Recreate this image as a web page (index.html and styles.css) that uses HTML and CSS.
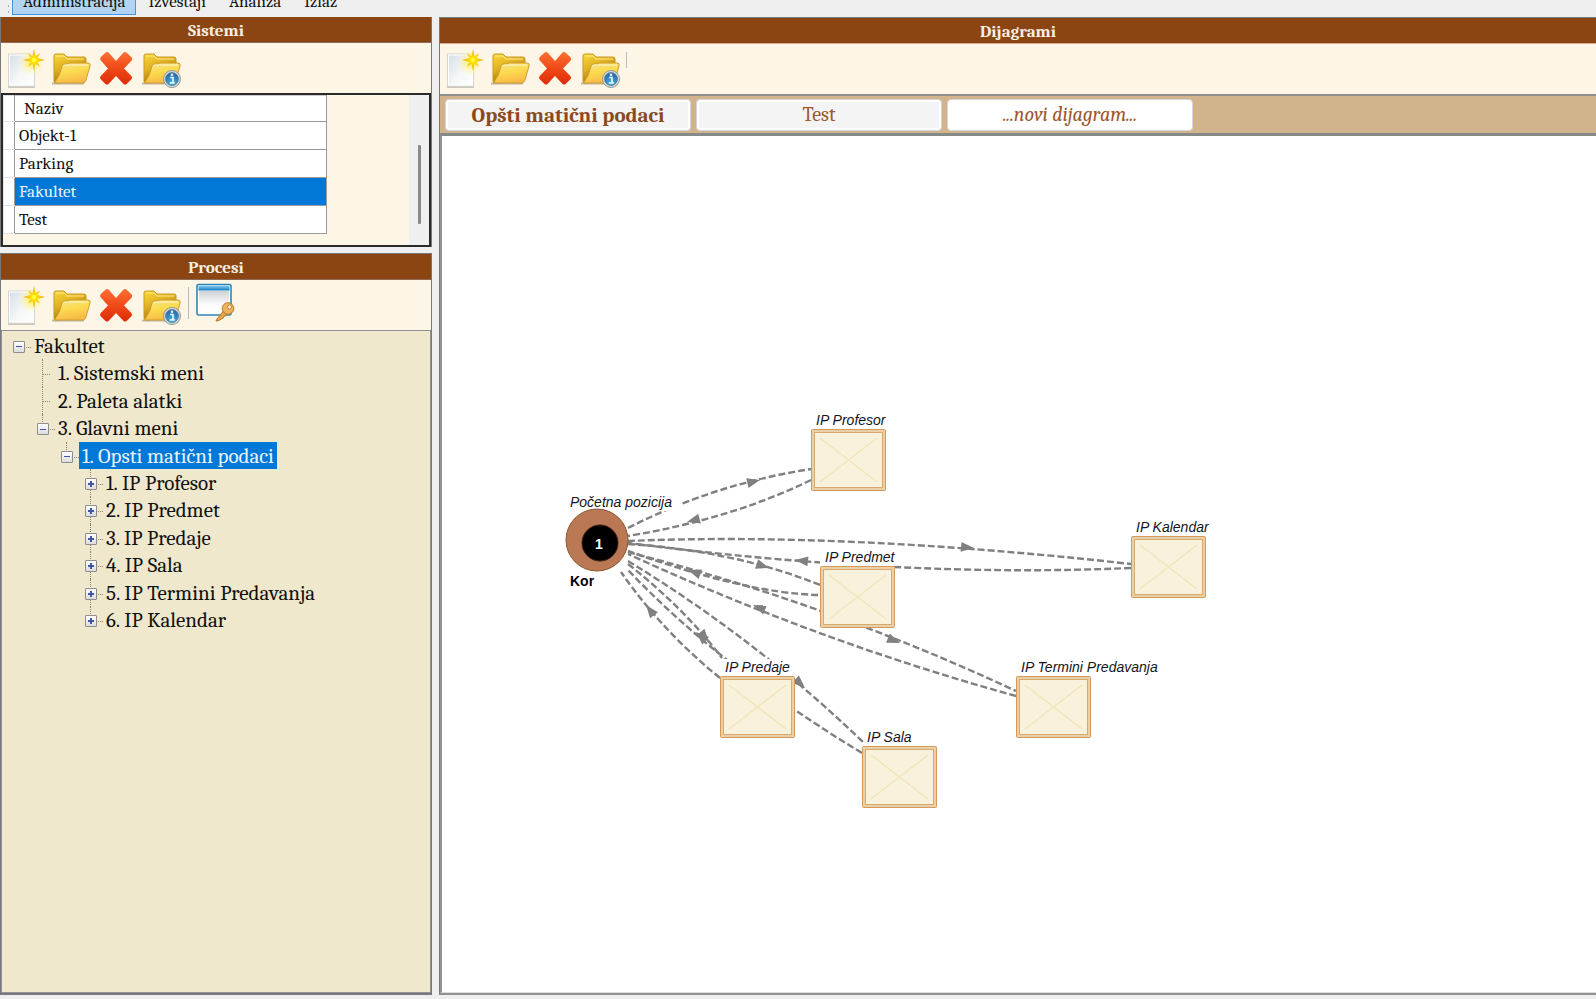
FILE: index.html
```
<!DOCTYPE html>
<html lang="sr-Latn">
<head>
<meta charset="utf-8">
<title>Sistemi i dijagrami</title>
<link rel="stylesheet" href="styles.css">
</head>
<body>
<svg class="defs" aria-hidden="true">
  <defs>
    <linearGradient id="paper" x1="0" y1="0" x2="1" y2="1"><stop offset="0" stop-color="#d3dde6"/><stop offset=".55" stop-color="#f5f7f8"/><stop offset="1" stop-color="#fff"/></linearGradient>
    <radialGradient id="glow"><stop offset="0" stop-color="#fff04a" stop-opacity=".9"/><stop offset="1" stop-color="#fff9a0" stop-opacity="0"/></radialGradient>
    <radialGradient id="spark"><stop offset="0" stop-color="#fff600"/><stop offset="1" stop-color="#f7a116"/></radialGradient>
    <linearGradient id="fback" x1="0" y1="0" x2=".5" y2="1"><stop offset="0" stop-color="#fbd93a"/><stop offset=".5" stop-color="#dfae22"/><stop offset="1" stop-color="#8e640c"/></linearGradient>
    <linearGradient id="ffront" x1="0" y1="0" x2=".3" y2="1"><stop offset="0" stop-color="#f3e29a"/><stop offset=".5" stop-color="#fbdc4e"/><stop offset="1" stop-color="#f9bb48"/></linearGradient>
    <linearGradient id="red" x1="0" y1="0" x2="0" y2="1"><stop offset="0" stop-color="#ff7034"/><stop offset=".5" stop-color="#ef4a18"/><stop offset="1" stop-color="#de2c08"/></linearGradient>
    <radialGradient id="info" cx=".5" cy=".8" r=".7"><stop offset="0" stop-color="#3db6e4"/><stop offset="1" stop-color="#2a68ac"/></radialGradient>
    <linearGradient id="win" x1="0" y1="0" x2="0" y2="1"><stop offset="0" stop-color="#cfd3d6"/><stop offset=".6" stop-color="#fafafa"/><stop offset="1" stop-color="#fff"/></linearGradient>
    <linearGradient id="bar" x1="0" y1="0" x2="0" y2="1"><stop offset="0" stop-color="#8ccdf0"/><stop offset="1" stop-color="#0d7cc4"/></linearGradient>
  </defs>
  <symbol id="i-new" viewBox="0 0 40 40">
    <path d="M2 39h27" stroke="#b9b5aa" stroke-width="1.4"/>
    <rect x="2.500" y="6" width="26" height="32" fill="url(#paper)" stroke="#d5d5d0"/>
    <rect x="3.500" y="7" width="24" height="30" fill="none" stroke="#fff"/>
    <circle cx="25" cy="15" r="13" fill="url(#glow)"/>
    <path d="M28 1l1.500 7 4.500-2.500-2.500 4.500 7.500 2-7.500 2 2.500 4.500-4.500-2.500-1.500 7-1.500-7-4.500 2.500 2.500-4.500-7.500-2 7.500-2-2.500-4.500 4.500 2.500z" fill="url(#spark)"/>
    <circle cx="28" cy="12" r="2" fill="#ffff40"/>
  </symbol>
  <symbol id="i-folder" viewBox="0 0 40 40">
    <path d="M1 35.500h32" stroke="#a39d8a" stroke-width="2" opacity=".7"/>
    <path d="M3 8q0-2 2-2h8l3 3h17q2 0 2 2v6L30 33 5 35q-2 0-2-2z" fill="url(#fback)" stroke="#c79a1e"/>
    <path d="M5 8h8l3 3h17" fill="none" stroke="#ffe98a"/>
    <path d="M4 34Q9 28 11 18q1-2 3-2h3l2-1h18q3 0 2 3l-4 14q-1 3-3 3H5q-1 0-1-1z" fill="url(#ffront)" stroke="#cf9f2d"/>
    <path d="M12 18q1-1 3-1h22" fill="none" stroke="#fff6c6"/>
  </symbol>
  <symbol id="i-delete" viewBox="0 0 40 40">
    <path d="M4.600 9.200l5-4.600q1.500-1 3 0L20 13l7.500-8.400q1.500-1 3 0l5.200 5q1 1.400 0 2.800L28 20.500l7.600 7.800q1 1.400 0 2.800l-5 5q-1.500 1-3 0L20 28l-7.500 8.100q-1.500 1-3 0l-5-5q-1-1.400 0-2.800L12 20.500 4.600 12.200q-1-1.500 0-3z" fill="url(#red)"/>
  </symbol>
  <symbol id="i-folder-info" viewBox="0 0 40 40">
    <use href="#i-folder"/>
    <circle cx="31" cy="31" r="8.500" fill="#d9dcd8" stroke="#8f9a9a"/>
    <circle cx="31" cy="31" r="6.500" fill="url(#info)" stroke="#5b7f94" stroke-width=".8"/>
    <path d="M29 29.500h3v5h1.500M28.800 34.800h5" fill="none" stroke="#e6f4fa" stroke-width="1.700"/>
    <circle cx="31" cy="26.800" r="1.300" fill="#e6f4fa"/>
  </symbol>
  <symbol id="i-window-key" viewBox="0 0 40 40">
    <rect x="1" y="1.500" width="34" height="30.500" rx="1.500" fill="#fff" stroke="#2e87b8" stroke-width="1.600"/>
    <rect x="2.500" y="2.500" width="31" height="5" fill="url(#bar)"/>
    <rect x="3" y="8" width="30" height="22" fill="url(#win)"/>
    <path d="M29 26L21 36l-1 2 3-.5 2-1.500 2-.5.500-2 2-.5 3-4" fill="#e8a548" stroke="#b4772a"/>
    <circle cx="32" cy="25.500" r="5.800" fill="#efb25a" stroke="#b4772a"/>
    <circle cx="33.500" cy="24" r="2" fill="#fff4dc" stroke="#b4772a" stroke-width=".8"/>
  </symbol>
</svg>

<div class="app">
  <nav class="menubar" aria-label="Glavni meni">
    <span class="grip"></span>
    <button class="menu menu-active" type="button">Administracija</button>
    <button class="menu" type="button">Izveštaji</button>
    <button class="menu" type="button">Analiza</button>
    <button class="menu" type="button">Izlaz</button>
  </nav>
  <main class="workspace">
    <div class="sidebar">
      <section class="panel systems">
        <h2 class="title">Sistemi</h2>
        <div class="toolbar">
          <button class="tool" type="button" aria-label="Novi sistem"><svg><use href="#i-new"/></svg></button>
          <button class="tool" type="button" aria-label="Otvori sistem"><svg><use href="#i-folder"/></svg></button>
          <button class="tool" type="button" aria-label="Obriši sistem"><svg><use href="#i-delete"/></svg></button>
          <button class="tool" type="button" aria-label="Podaci o sistemu"><svg><use href="#i-folder-info"/></svg></button>
        </div>
        <div class="gridbox">
          <table class="grid">
            <thead><tr><th class="mark"></th><th>Naziv</th></tr></thead>
            <tbody>
              <tr><td class="mark"></td><td>Objekt-1</td></tr>
              <tr><td class="mark"></td><td>Parking</td></tr>
              <tr class="selected"><td class="mark"></td><td>Fakultet</td></tr>
              <tr><td class="mark"></td><td>Test</td></tr>
            </tbody>
          </table>
          <div class="track"><div class="thumb"></div></div>
        </div>
      </section>
      <section class="panel processes">
        <h2 class="title">Procesi</h2>
        <div class="toolbar">
          <button class="tool" type="button" aria-label="Novi proces"><svg><use href="#i-new"/></svg></button>
          <button class="tool" type="button" aria-label="Otvori proces"><svg><use href="#i-folder"/></svg></button>
          <button class="tool" type="button" aria-label="Obriši proces"><svg><use href="#i-delete"/></svg></button>
          <button class="tool" type="button" aria-label="Podaci o procesu"><svg><use href="#i-folder-info"/></svg></button>
          <span class="sep"></span>
          <button class="tool tool-key" type="button" aria-label="Prava pristupa"><svg><use href="#i-window-key"/></svg></button>
        </div>
        <div class="treebox">
          <ul class="tree">
            <li class="l0"><button class="toggle" type="button" aria-label="Skupi"></button><span class="node">Fakultet</span></li>
            <li class="l1 line"><span class="stub"></span><span class="node">1. Sistemski meni</span></li>
            <li class="l1 line"><span class="stub"></span><span class="node">2. Paleta alatki</span></li>
            <li class="l1 line last"><button class="toggle" type="button" aria-label="Skupi"></button><span class="node">3. Glavni meni</span></li>
            <li class="l2 line last"><button class="toggle" type="button" aria-label="Skupi"></button><span class="node chosen">1. Opsti matični podaci</span></li>
            <li class="l3 line"><button class="toggle plus" type="button" aria-label="Proširi"></button><span class="node">1. IP Profesor</span></li>
            <li class="l3 line"><button class="toggle plus" type="button" aria-label="Proširi"></button><span class="node">2. IP Predmet</span></li>
            <li class="l3 line"><button class="toggle plus" type="button" aria-label="Proširi"></button><span class="node">3. IP Predaje</span></li>
            <li class="l3 line"><button class="toggle plus" type="button" aria-label="Proširi"></button><span class="node">4. IP Sala</span></li>
            <li class="l3 line"><button class="toggle plus" type="button" aria-label="Proširi"></button><span class="node">5. IP Termini Predavanja</span></li>
            <li class="l3 line last"><button class="toggle plus" type="button" aria-label="Proširi"></button><span class="node">6. IP Kalendar</span></li>
          </ul>
        </div>
      </section>
    </div>
    <section class="diagrams">
      <h2 class="title">Dijagrami</h2>
      <div class="toolbar">
        <button class="tool" type="button" aria-label="Novi dijagram"><svg><use href="#i-new"/></svg></button>
        <button class="tool" type="button" aria-label="Otvori dijagram"><svg><use href="#i-folder"/></svg></button>
        <button class="tool" type="button" aria-label="Obriši dijagram"><svg><use href="#i-delete"/></svg></button>
        <button class="tool" type="button" aria-label="Podaci o dijagramu"><svg><use href="#i-folder-info"/></svg></button>
        <span class="sep sep-short"></span>
      </div>
      <div class="tabs">
        <button class="tab tab-active" type="button">Opšti matični podaci</button>
        <button class="tab" type="button">Test</button>
        <button class="tab tab-new" type="button">...novi dijagram...</button>
      </div>
      <div class="canvas">
        <svg class="drawing" role="img" aria-label="Opšti matični podaci">
          <defs>
            <path id="head" d="M0 0L-13-5V5z"/>
            <g id="ip">
              <rect x=".5" y=".5" width="74" height="61" rx="1" fill="#e9d0a6" stroke="#d39a5c"/>
              <rect x="3.500" y="3.500" width="68" height="55" fill="#f8f1dc" stroke="#d9aa70"/>
              <path d="M9 9l57 44M66 9L9 53" stroke="#f1e6ba" stroke-width="1.500"/>
            </g>
          </defs>
          <g transform="translate(-442 -136)">
            <g class="links">
              <path d="M628 528Q714 484 811 469"/>
              <path d="M811 480Q731 519 628 536"/>
              <path d="M628 541Q844 532 1131 564"/>
              <path d="M1131 568Q900 578 628 543"/>
              <path d="M628 544Q736 551 820 585"/>
              <path d="M818 595Q745 593 628 551"/>
              <path d="M628 552Q830 604 1016 691"/>
              <path d="M1016 696Q820 642 628 554"/>
              <path d="M628 561Q756 639 863 742"/>
              <path d="M862 753Q720 667 628 570"/>
              <path d="M628 564Q684 608 722 658"/>
              <path d="M720 678Q662 631 621 572"/>
            </g>
            <g class="heads">
              <use href="#head" transform="translate(760 480) rotate(-14)"/>
              <use href="#head" transform="translate(687 522) rotate(165)"/>
              <use href="#head" transform="translate(974 548) rotate(5)"/>
              <use href="#head" transform="translate(795 560) rotate(186)"/>
              <use href="#head" transform="translate(769 568) rotate(18)"/>
              <use href="#head" transform="translate(688 570) rotate(199)"/>
              <use href="#head" transform="translate(900 643) rotate(22)"/>
              <use href="#head" transform="translate(753 605) rotate(202)"/>
              <use href="#head" transform="translate(805 688) rotate(43)"/>
              <use href="#head" transform="translate(696 632) rotate(222)"/>
              <use href="#head" transform="translate(709 642) rotate(50)"/>
              <use href="#head" transform="translate(646 605) rotate(232)"/>
            </g>
            <g fill="#fff">
              <rect x="568" y="494" width="113" height="17"/>
              <rect x="820" y="549" width="76" height="17"/>
              <rect x="722" y="659" width="73" height="17"/>
              <rect x="864" y="729" width="50" height="17"/>
            </g>
            <use href="#ip" x="811" y="429"/>
            <use href="#ip" x="820" y="566"/>
            <use href="#ip" x="720" y="676"/>
            <use href="#ip" x="862" y="746"/>
            <use href="#ip" x="1131" y="536"/>
            <use href="#ip" x="1016" y="676"/>
            <g class="labels">
              <text x="816" y="425">IP Profesor</text>
              <text x="825" y="562">IP Predmet</text>
              <text x="725" y="672">IP Predaje</text>
              <text x="867" y="742">IP Sala</text>
              <text x="1136" y="532">IP Kalendar</text>
              <text x="1021" y="672">IP Termini Predavanja</text>
              <text x="570" y="507">Početna pozicija</text>
            </g>
            <circle cx="597" cy="540" r="31" fill="#ba7855" stroke="#8a5a28"/>
            <circle cx="600" cy="543" r="18" fill="#000" stroke="#3a2418"/>
            <text class="start" x="599" y="549">1</text>
            <text class="owner" x="570" y="586">Kor</text>
          </g>
        </svg>
      </div>
    </section>
  </main>
</div>
</body>
</html>
```

FILE: styles.css
```
* { box-sizing: border-box; }
html, body { height: 100%; margin: 0; }
body {
  background: #efefef;
  color: #111;
  font-family: Cambria, Caladea, "Liberation Serif", serif;
  overflow: hidden;
}
button { font: inherit; color: inherit; margin: 0; padding: 0; }
.defs { position: absolute; width: 0; height: 0; }

.app { display: flex; flex-direction: column; height: 100vh; padding-bottom: 4px; }

.menubar { display: flex; align-items: flex-end; height: 17px; padding: 0 0 2px 7px; overflow: hidden; flex: none; }
.grip { width: 3px; height: 12px; margin-right: 2px; background: radial-gradient(circle, #aaa 1px, transparent 1px) 0 0 / 3px 6px; }
.menu { height: 26px; padding: 0 10px; border: 1px solid transparent; background: none; font-size: 17px; line-height: 24px; white-space: nowrap; flex: none; }
.menu + .menu { margin-left: 1px; }
.menu-active { background: #b0d4f1; border-color: #3f96df; }

.workspace { display: flex; flex: 1; min-height: 0; gap: 7px; }
.sidebar { display: flex; flex-direction: column; width: 432px; gap: 6px; flex: none; }
.panel { display: flex; flex-direction: column; border: 1px solid #77797b; }
.systems { border-top: 0; border-bottom: 0; }
.processes { flex: 1; min-height: 0; border-bottom-width: 2px; }

.title { margin: 0; height: 26px; flex: none; background: #8b4513; color: #f8eee2; font-size: 17px; font-weight: bold; line-height: 27px; text-align: center; border-bottom: 1px solid #8c6a55; }
.toolbar { display: flex; gap: 5px; height: 50px; padding: 5px 0 0 5px; background: #fdf5e6; flex: none; }
.tool { width: 40px; height: 40px; border: 0; background: none; flex: none; }
.tool svg { display: block; width: 40px; height: 40px; }
.sep { width: 1px; height: 32px; margin: 2px 0 0 2px; background: #b9bbc0; }
.tool-key { margin: -2px 0 0 2px; }

.gridbox { display: flex; justify-content: space-between; height: 154px; border: 2px solid #2a2a2a; background: #fdf5e6; }
.grid { width: 324px; height: 139px; border-collapse: collapse; table-layout: fixed; font-size: 17px; }
.grid th, .grid td { border: 1px solid #999; background: #fff; padding: 1px 4px 0; text-align: left; font-weight: normal; line-height: 24px; }
.grid thead th { padding-left: 9px; border-top-color: #ccc; }
.grid .mark { width: 11px; padding: 0; border-color: #e3e3e3; border-right-color: #999; }
.grid .selected td:last-child { background: #0078d7; color: #e8f2fb; }
.track { width: 20px; height: 100%; padding: 50px 8px 0 9px; background: #efefef; }
.thumb { height: 79px; background: #8a8a8a; border-radius: 1px; }

.treebox { flex: 1; min-height: 0; padding: 1px 0 0 9px; border: 1px solid #8f9196; background: #efe8cc; }
.tree { display: grid; grid-auto-rows: 1fr; height: 302px; margin: 0; padding: 0; list-style: none; font-size: 21px; }
.tree li { position: relative; display: flex; align-items: center; white-space: nowrap; }
.l1 { margin-left: 24px; }
.l2 { margin-left: 48px; }
.l3 { margin-left: 72px; }
.line::before { content: ""; position: absolute; left: 7px; top: 0; bottom: 0; border-left: 1px dotted #8a8674; }
.last::before { bottom: 50%; }
.toggle { position: relative; width: 12px; height: 12px; margin: 2px 0 0 2px; border: 1px solid #8d8d8d; border-radius: 1px; background: linear-gradient(90deg, #3f57a5, #3f57a5) center / 6px 1px no-repeat, linear-gradient(#fff, #dcdcdc); flex: none; }
.plus { background: linear-gradient(#3f57a5, #3f57a5) center / 6px 2px no-repeat, linear-gradient(#3f57a5, #3f57a5) center / 2px 6px no-repeat, linear-gradient(#fff, #dcdcdc); }
.toggle::after { content: ""; position: absolute; left: 12px; top: 5px; width: 5px; border-top: 1px dotted #8a8674; }
.stub { width: 7px; margin: 2px 0 0 8px; border-top: 1px dotted #8a8674; flex: none; }
.node { display: flex; align-items: center; height: 100%; margin-left: 6px; padding: 0 3px; }
.stub + .node { margin-left: 5px; }
.chosen { background: #0078d7; color: #e8f2fb; }

.diagrams { display: flex; flex-direction: column; flex: 1; min-width: 0; border: 1px solid #77797b; border-right: 0; border-bottom: 2px solid #929292; }
.diagrams .title { border-bottom-color: #d8ac8a; }
.diagrams .toolbar { padding-top: 4px; }
.diagrams .sep-short { height: 16px; margin: 4px 0 0 1px; }
.tabs { display: flex; gap: 5px; height: 39px; padding: 3px 5px; background: #d2b48c; border-top: 2px solid #8f8f8d; flex: none; }
.tab { width: 246px; height: 32px; border: 1px solid #d3d5da; border-radius: 4px; background: #f4f4f4; box-shadow: inset 0 0 0 2px #fff; color: #99592b; font-size: 20px; line-height: 28px; }
.tab-active { color: #8b4a1c; font-weight: bold; font-size: 21px; }
.tab-new { background: #fff; font-style: italic; }
.canvas { flex: 1; min-height: 0; border-top: 3px solid #858987; border-left: 2px solid #929292; border-bottom: 1px solid #ddd; background: #fff; }
.drawing { display: block; width: 100%; height: 100%; }
.links { fill: none; stroke: #808080; stroke-width: 2.4; stroke-dasharray: 7 3; }
.heads { fill: #808080; }
.labels { font: italic 14px "Liberation Sans", Arial, sans-serif; fill: #15151c; }
.start { font: bold 14px "Liberation Sans", Arial, sans-serif; fill: #fff; text-anchor: middle; }
.owner { font: bold 14px "Liberation Sans", Arial, sans-serif; fill: #000; }
```
